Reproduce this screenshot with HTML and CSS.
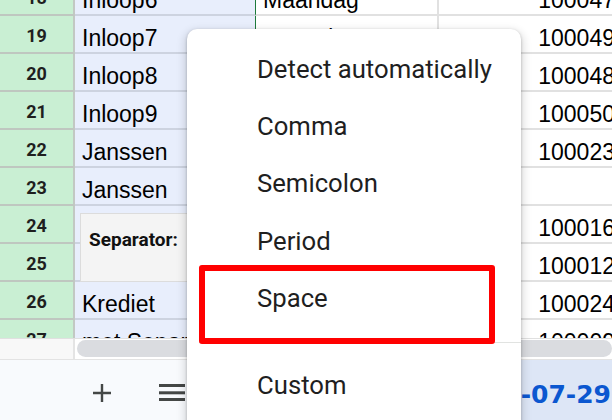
FILE: index.html
```
<!DOCTYPE html>
<html>
<head>
<meta charset="utf-8">
<link rel="stylesheet" href="styles.css">
</head>
<body>
<div class="app">
  <div class="sheet">
    <div class="rows">
      <div class="row"><div class="rh">18</div><div class="c ca">Inloop6</div><div class="c cb">Maandag</div><div class="c cc">100047</div></div>
      <div class="row"><div class="rh">19</div><div class="c ca">Inloop7</div><div class="c cb">Maandag</div><div class="c cc">100049</div></div>
      <div class="row"><div class="rh">20</div><div class="c ca">Inloop8</div><div class="c cb"></div><div class="c cc">100048</div></div>
      <div class="row"><div class="rh">21</div><div class="c ca">Inloop9</div><div class="c cb"></div><div class="c cc">100050</div></div>
      <div class="row"><div class="rh">22</div><div class="c ca">Janssen</div><div class="c cb"></div><div class="c cc">100023</div></div>
      <div class="row"><div class="rh">23</div><div class="c ca">Janssen</div><div class="c cb"></div><div class="c cc"></div></div>
      <div class="row"><div class="rh">24</div><div class="c ca"></div><div class="c cb"></div><div class="c cc">100016</div></div>
      <div class="row"><div class="rh">25</div><div class="c ca"></div><div class="c cb"></div><div class="c cc">100012</div></div>
      <div class="row"><div class="rh">26</div><div class="c ca">Krediet</div><div class="c cb"></div><div class="c cc">100024</div></div>
      <div class="row"><div class="rh">27</div><div class="c ca">met Separator</div><div class="c cb"></div><div class="c cc">100009</div></div>
    </div>
  </div>
  <div class="hscroll">
    <div class="hs-corner"></div>
    <div class="hs-track"><div class="hs-thumb"></div></div>
  </div>
  <div class="bottombar">
    <svg class="ico-plus" width="20" height="20" viewBox="0 0 20 20"><path d="M10 1v18M1 10h18" stroke="#444746" stroke-width="2.4" fill="none"/></svg>
    <svg class="ico-menu" width="26" height="20" viewBox="0 0 26 20"><rect x="0" y="1" width="26" height="3" fill="#444746"/><rect x="0" y="8.3" width="26" height="3" fill="#444746"/><rect x="0" y="15" width="26" height="3" fill="#444746"/></svg>
    <div class="tab"><span class="tab-name">2024-07-29</span></div>
  </div>

  <div class="sep-box">Separator:</div>

  <div class="menu">
    <div class="item">Detect automatically</div>
    <div class="item">Comma</div>
    <div class="item">Semicolon</div>
    <div class="item">Period</div>
    <div class="item">Space</div>
    <div class="divider"></div>
    <div class="item">Custom</div>
  </div>

  <div class="highlight"></div>
</div>
</body>
</html>
```
FILE: styles.css
```
* { box-sizing: border-box; }
html, body { margin: 0; padding: 0; }
body { width: 612px; height: 420px; overflow: hidden; background: #fff; }

.app {
  position: relative;
  width: 612px;
  height: 420px;
  overflow: hidden;
  font-family: "Liberation Sans", Arial, sans-serif;
}

.sheet {
  height: 338px;
  overflow: hidden;
}
.rows { margin-top: -22px; width: 640px; }

.row {
  display: grid;
  grid-template-columns: 75px 180px 184px 201px;
  height: 38px;
}
.rh {
  background: #c9efd3;
  border-right: 2px solid #c2c8c3;
  border-bottom: 2px solid #bfc7c0;
  font-family: Roboto, "Liberation Sans", sans-serif;
  font-weight: 700;
  font-size: 18px;
  color: #1f1f1f;
  display: flex;
  align-items: center;
  justify-content: center;
  padding-top: 3px;
}
.c {
  font-size: 23px;
  line-height: 26px;
  color: #000;
  display: flex;
  align-items: flex-end;
  white-space: nowrap;
  overflow: hidden;
  padding: 0 7px 1px;
}
.ca {
  background: #e8eefc;
  border-bottom: 2px solid #cdd3e0;
}
.cb {
  border-left: 1px solid #1e7a3c;
  border-right: 2px solid #e1e1e1;
  border-bottom: 2px solid #e1e1e1;
}
.cc {
  border-bottom: 2px solid #e1e1e1;
  justify-content: flex-end;
  padding-right: 25px;
}

.hscroll {
  display: grid;
  grid-template-columns: 75px 1fr;
  height: 22px;
  border-top: 1px solid #e0e0e0;
  border-bottom: 1px solid #e3e3e3;
}
.hs-corner {
  background: #f8f8f8;
  border-right: 2px solid #e4e4e4;
}
.hs-track { padding: 1px 0 0 2px; }
.hs-thumb {
  height: 17px;
  border-radius: 9px;
  background: #dadce0;
}

.bottombar {
  height: 60px;
  background: #f8fafd;
  display: flex;
  align-items: center;
  padding-left: 92px;
}
.ico-plus { margin-top: 6px; display: block; }
.ico-menu { margin-left: 47px; margin-top: 6px; display: block; }
.tab {
  margin-left: auto;
  align-self: stretch;
  background: #dde6f6;
  display: flex;
  align-items: center;
  padding: 8px 1px 0 24px;
}
.tab-name {
  font-family: "DejaVu Sans", sans-serif;
  font-weight: 700;
  font-size: 25px;
  color: #0b57d0;
}

.sep-box {
  position: absolute;
  left: 80px;
  top: 213px;
  width: 140px;
  height: 69px;
  background: #f4f4f4;
  border: 1px solid #dcdcdc;
  font-family: Roboto, "Liberation Sans", sans-serif;
  font-weight: 700;
  font-size: 19px;
  color: #111;
  padding: 14px 0 0 8px;
}

.menu {
  position: absolute;
  left: 187px;
  top: 29px;
  width: 334px;
  height: 430px;
  background: #fff;
  border-radius: 10px;
  box-shadow: 0 1px 3px rgba(0,0,0,0.25), 0 4px 9px 3px rgba(0,0,0,0.12);
  padding-top: 11px;
  font-family: Roboto, "Liberation Sans", sans-serif;
}
.item {
  height: 57.33px;
  display: flex;
  align-items: center;
  padding-left: 70px;
  font-size: 25.7px;
  color: #1f1f1f;
  white-space: nowrap;
}
.divider {
  height: 1px;
  background: #e1e3e1;
  margin: 15px 0 14px 12px;
}

.highlight {
  position: absolute;
  left: 199px;
  top: 265px;
  width: 296px;
  height: 79px;
  border: 6px solid #ff0000;
  border-radius: 3px;
}
```
